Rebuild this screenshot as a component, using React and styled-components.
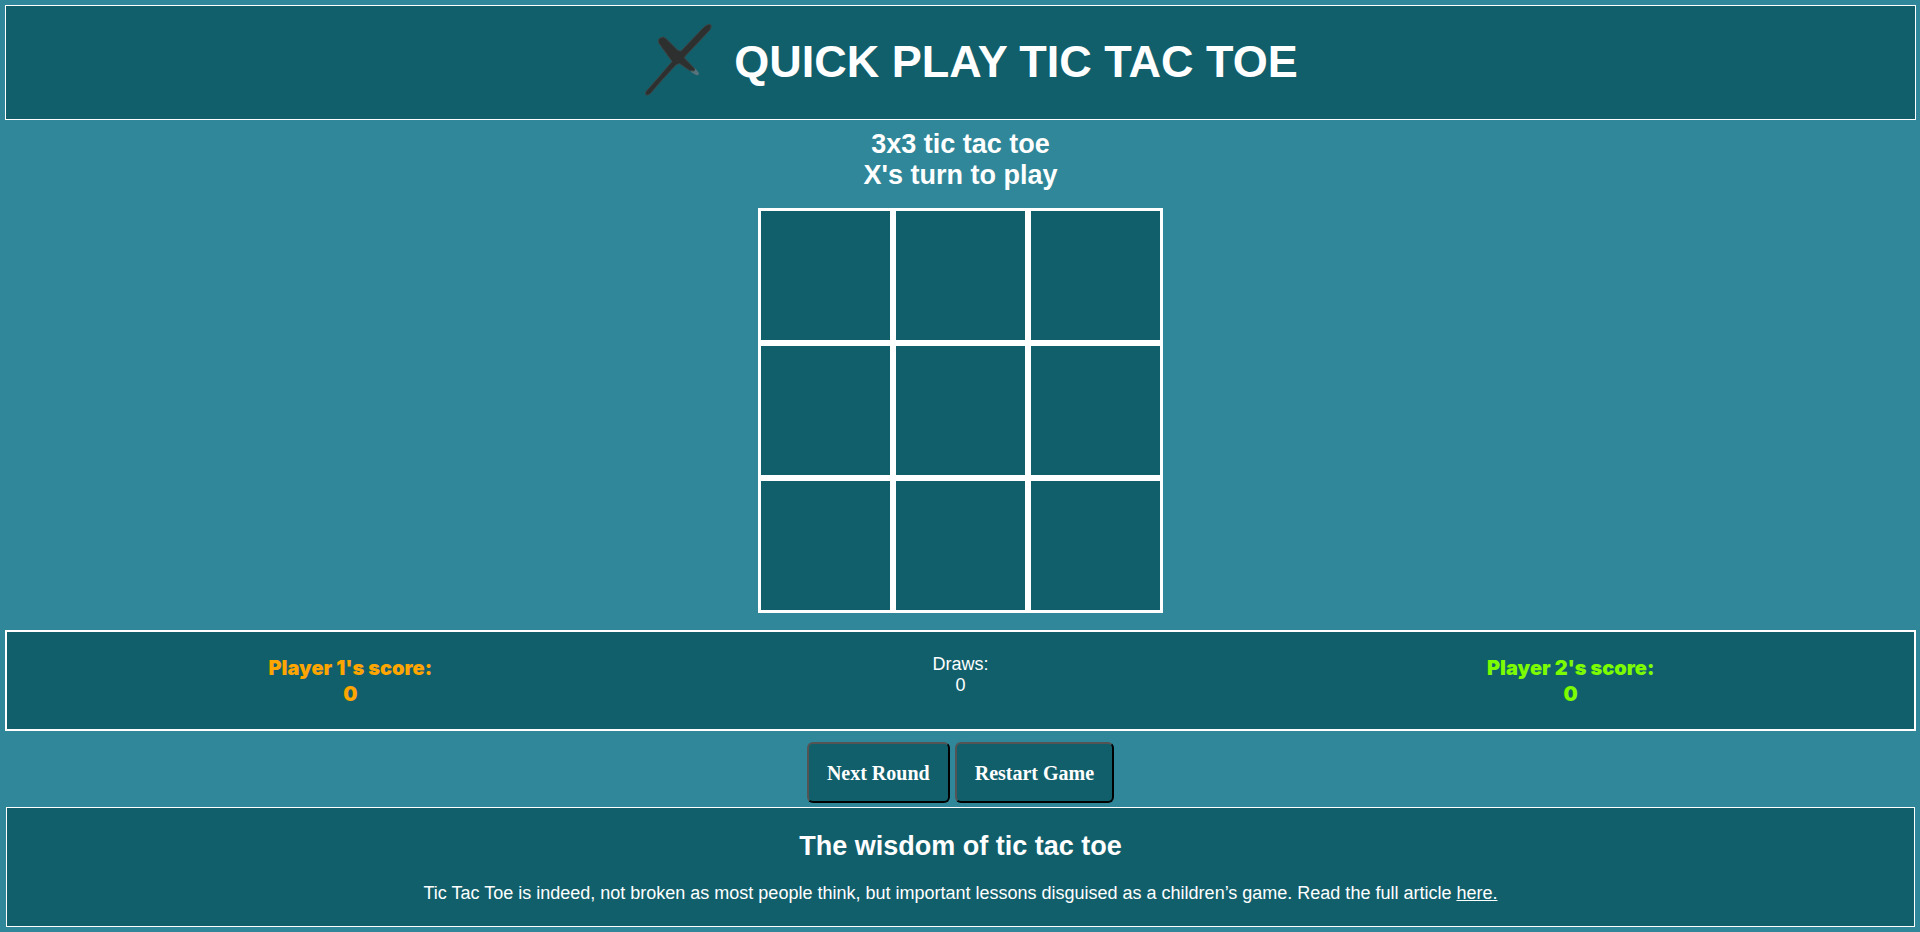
import React, { useState } from "react";
import styled, { createGlobalStyle } from "styled-components";

const GlobalStyle = createGlobalStyle`
  * { box-sizing: border-box; }
  body {
    margin: 0;
    background: #2f8799;
    color: white;
    font-family: "Liberation Sans", Arial, sans-serif;
    font-size: 18px;
    line-height: 21px;
    text-align: center;
  }
`;

const Page = styled.div`
  display: flex;
  flex-direction: column;
  padding: 5px 4px 5px 5px;
`;

const Header = styled.header`
  display: flex;
  align-items: center;
  justify-content: center;
  padding: 16px 0 17px;
  background: #125f6c;
  border: 1px solid white;
`;

const Logo = styled.svg`
  width: 111px;
  height: 80px;
`;

const Title = styled.h1`
  margin: 0;
  font-size: 45px;
  line-height: 52px;
`;

const Heading = styled.h2`
  margin: 0;
  font-size: 27px;
  font-weight: bold;
  line-height: 31px;
`;

const Game = styled.main`
  display: flex;
  flex-direction: column;
  align-items: center;
  padding-top: 9px;
`;

const Board = styled.div`
  display: grid;
  grid-template-columns: repeat(3, 135px);
  grid-auto-rows: 135px;
  margin: 17px 0;
`;

const Cell = styled.button`
  padding: 0;
  border: 3px solid white;
  background: #125f6c;
  color: ${(p) => (p.$mark === "X" ? "orange" : "lawngreen")};
  font: bold 90px "Liberation Sans", Arial, sans-serif;
  cursor: pointer;
`;

const Scores = styled.section`
  display: grid;
  grid-template-columns: repeat(3, 1fr);
  padding: 22px 2%;
  background: #125f6c;
  border: 2px solid white;
`;

const Draws = styled.div``;

const PlayerScore = styled.div`
  padding-top: 1px;
  color: ${(p) => p.$color};
  font-family: "Arial Black", Inter, sans-serif;
  font-size: 20px;
  font-weight: 900;
  line-height: 26px;
`;

const Actions = styled.div`
  display: flex;
  justify-content: center;
  gap: 5px;
  padding: 11px 0 4px;
`;

const ActionButton = styled.button`
  padding: 18px 18px 16px;
  border: 2px outset black;
  border-radius: 6px;
  background: #125f6c;
  color: white;
  font: bold 20px/23px "Liberation Serif", "Times New Roman", serif;
  cursor: pointer;
`;

const Article = styled.footer`
  margin: 0 1px;
  padding: 23px 0 22px;
  background: #125f6c;
  border: 1px solid white;
`;

const Text = styled.p`
  margin: 21px 0 0;
`;

const TextLink = styled.a`
  color: white;
`;

const LINES = [
  [0, 1, 2], [3, 4, 5], [6, 7, 8],
  [0, 3, 6], [1, 4, 7], [2, 5, 8],
  [0, 4, 8], [2, 4, 6],
];

const EMPTY = Array(9).fill("");

const findWinner = (cells) => {
  const line = LINES.find(([a, b, c]) => cells[a] && cells[a] === cells[b] && cells[a] === cells[c]);
  return line ? cells[line[0]] : "";
};

export default function App() {
  const [cells, setCells] = useState(EMPTY);
  const [turn, setTurn] = useState("X");
  const [score, setScore] = useState({ X: 0, O: 0, draws: 0 });

  const winner = findWinner(cells);
  const full = cells.every(Boolean);
  const status = winner ? `${winner} wins!` : full ? "It's a draw" : `${turn}'s turn to play`;

  const play = (i) => {
    if (cells[i] || winner) return;
    const next = cells.map((c, n) => (n === i ? turn : c));
    setCells(next);
    setTurn(turn === "X" ? "O" : "X");
    const won = findWinner(next);
    if (won) setScore({ ...score, [won]: score[won] + 1 });
    else if (next.every(Boolean)) setScore({ ...score, draws: score.draws + 1 });
  };

  const nextRound = () => {
    setCells(EMPTY);
    setTurn("X");
  };

  const restart = () => {
    nextRound();
    setScore({ X: 0, O: 0, draws: 0 });
  };

  return (
    <>
      <GlobalStyle />
      <Page>
        <Header>
          <Logo viewBox="0 0 111 80" aria-hidden="true">
            <path d="M68 46 L72 46 L76 51 Q76 54 73 53 L68 50Z" fill="#56727a" />
            <path
              d="M81 5 Q86 1 88 3 Q89 6 86 9 L62 34.500 L61.500 36 L72 47 L71 49 L66.500 48.500 L56.500 41.500 L53 43 L40 57 L27 72 Q22 75 22.500 70 L34 57 L49 39.500 L36 21.500 Q34 17 38 15.500 Q41 14 43 16.500 L55 28.500 L58 29Z"
              fill="#2e2f2f"
              stroke="#3c4647"
              strokeWidth="1"
              strokeLinejoin="round"
            />
          </Logo>
          <Title>QUICK PLAY TIC TAC TOE</Title>
        </Header>

        <Game>
          <Heading>3x3 tic tac toe</Heading>
          <Heading as="div" role="status">{status}</Heading>
          <Board>
            {cells.map((mark, i) => (
              <Cell key={i} $mark={mark} aria-label={`Cell ${i + 1}`} onClick={() => play(i)}>
                {mark}
              </Cell>
            ))}
          </Board>
        </Game>

        <Scores>
          <PlayerScore $color="orange">
            Player 1's score:
            <div>{score.X}</div>
          </PlayerScore>
          <Draws>
            Draws:
            <div>{score.draws}</div>
          </Draws>
          <PlayerScore $color="lawngreen">
            Player 2's score:
            <div>{score.O}</div>
          </PlayerScore>
        </Scores>

        <Actions>
          <ActionButton onClick={nextRound}>Next Round</ActionButton>
          <ActionButton onClick={restart}>Restart Game</ActionButton>
        </Actions>

        <Article>
          <Heading>The wisdom of tic tac toe</Heading>
          <Text>
            Tic Tac Toe is indeed, not broken as most people think, but important lessons disguised as a
            children’s game. Read the full article <TextLink href="#article">here.</TextLink>
          </Text>
        </Article>
      </Page>
    </>
  );
}
